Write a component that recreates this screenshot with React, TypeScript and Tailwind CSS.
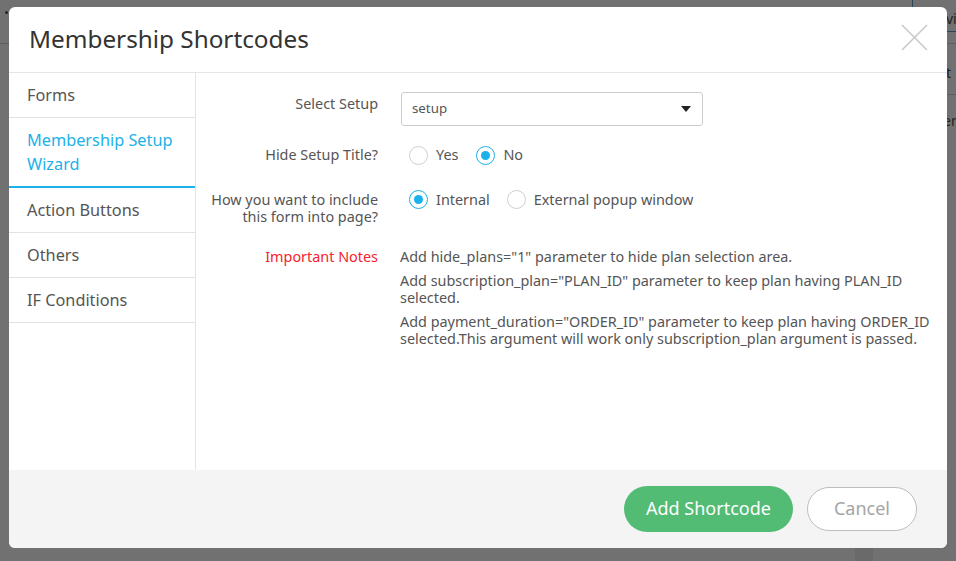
import React from "react";

const font = { fontFamily: '"Noto Sans", "Open Sans", Arial, sans-serif' };

function Radio({ checked, label }: { checked: boolean; label: string }) {
  return (
    <div className="flex items-center">
      <span
        className={
          checked
            ? "w-[19px] h-[19px] rounded-full border border-[#1ab2e8] flex items-center justify-center bg-white"
            : "w-[19px] h-[19px] rounded-full border border-[#cfcfcf] bg-white"
        }
      >
        {checked && <span className="w-[9px] h-[9px] rounded-full bg-[#1ab2e8]" />}
      </span>
      <span className="ml-[8px] text-[14.4px] text-[#555]">{label}</span>
    </div>
  );
}

export default function App() {
  const tabs = [
    { label: "Forms", active: false },
    { label: "Membership Setup Wizard", active: true },
    { label: "Action Buttons", active: false },
    { label: "Others", active: false },
    { label: "IF Conditions", active: false },
  ];
  return (
    <div className="relative w-[956px] h-[561px] bg-[#717171] overflow-hidden" style={font}>
      {/* dimmed page behind the overlay */}
      <div className="absolute left-[912px] top-[-4px] w-[60px] h-[36px] rounded-[4px] border border-[#26475a] text-[#1d1d1d] text-[14px] pl-[33px] pt-[11px]">
        vie
      </div>
      <div className="absolute left-[940px] top-[43px] w-[20px] h-px bg-[#5e5e5e]" />
      <div className="absolute left-[940px] top-[94px] w-[20px] h-px bg-[#5e5e5e]" />
      <div className="absolute left-[946px] top-[62px] text-[14px] text-[#222]">t</div>
      <div className="absolute left-[943px] top-[110px] text-[14px] text-[#222]">er</div>
      <div className="absolute left-0 top-[43px] w-[10px] h-px bg-[#5e5e5e]" />
      <div className="absolute left-[5px] top-[11px] w-[3px] h-[3px] rounded-full bg-[#222]" />
      <div className="absolute left-[855px] top-[540px] w-[18px] h-[30px] bg-[#6a6a6a]" />

      {/* modal */}
      <div className="absolute left-[9px] top-[7px] w-[938px] h-[541px] bg-white rounded-[6px] overflow-hidden flex flex-col">
        <div className="h-[66px] shrink-0 flex items-center justify-between border-b border-[#e5e5e5] pl-[20px] pr-[19px]">
          <h1 className="text-[24.3px] text-[#333] leading-none pb-[1px]">Membership Shortcodes</h1>
          <svg width="27" height="27" viewBox="0 0 27 27" className="mb-[4px]">
            <path d="M1 1 L26 26 M26 1 L1 26" stroke="#c9c9c9" strokeWidth="1.6" fill="none" />
          </svg>
        </div>
        <div className="flex flex-1 min-h-0">
          <div className="w-[187px] shrink-0 border-r border-[#e3e3e3]">
            {tabs.map((t) =>
              t.active ? (
                <div
                  key={t.label}
                  className="px-[18px] pt-[10px] pb-[10px] text-[16.3px] leading-[24px] text-[#1ab2e8] border-b-2 border-[#1ab2e8]"
                >
                  Membership Setup
                  <br />
                  Wizard
                </div>
              ) : (
                <div
                  key={t.label}
                  className="px-[18px] py-[10px] text-[16.3px] leading-[24px] text-[#555] border-b border-[#e3e3e3]"
                >
                  {t.label}
                </div>
              )
            )}
          </div>
          <div className="flex-1 pt-[19px]">
            {/* Select Setup */}
            <div className="flex">
              <div className="w-[182px] text-right text-[14.4px] leading-[20px] text-[#555] pt-[2px]">Select Setup</div>
              <div className="ml-[23px] w-[302px] h-[34px] border border-[#ccc] rounded-[3px] flex items-center justify-between pl-[10px] pr-[11px]">
                <span className="text-[13.3px] text-[#555]">setup</span>
                <svg width="10" height="6" viewBox="0 0 10 6">
                  <path d="M0 0 L10 0 L5 6 Z" fill="#222" />
                </svg>
              </div>
            </div>
            {/* Hide setup title */}
            <div className="flex items-center mt-[19px] h-[20px]">
              <div className="w-[182px] text-right text-[14.4px] leading-[20px] text-[#555]">Hide Setup Title?</div>
              <div className="ml-[31px] flex items-center gap-[18px]">
                <Radio checked={false} label="Yes" />
                <Radio checked={true} label="No" />
              </div>
            </div>
            {/* include */}
            <div className="flex mt-[26px]">
              <div className="w-[182px] text-right text-[14.4px] leading-[17px] text-[#555]">
                How you want to include
                <br />
                this form into page?
              </div>
              <div className="ml-[31px] flex items-start gap-[17px] -mt-[2px]">
                <Radio checked={true} label="Internal" />
                <Radio checked={false} label="External popup window" />
              </div>
            </div>
            {/* notes */}
            <div className="flex mt-[23px]">
              <div className="w-[182px] text-right text-[14.4px] leading-[17px] text-[#f5222d]">Important Notes</div>
              <div className="ml-[22px] w-[540px] text-[14.4px] leading-[17px] text-[#555] flex flex-col gap-[7px]">
                <p>Add hide_plans="1" parameter to hide plan selection area.</p>
                <p>Add subscription_plan="PLAN_ID" parameter to keep plan having PLAN_ID selected.</p>
                <p>
                  Add payment_duration="ORDER_ID" parameter to keep plan having ORDER_ID selected.This argument will
                  work only subscription_plan argument is passed.
                </p>
              </div>
            </div>
          </div>
        </div>
        <div className="h-[78px] shrink-0 bg-[#f4f4f4] flex items-center justify-end pr-[30px] gap-[14px] pb-[1px]">
          <button className="w-[169px] h-[46px] rounded-full bg-[#52bb74] text-white text-[18px]">Add Shortcode</button>
          <button className="w-[110px] h-[44px] rounded-full bg-white border border-[#bdbdbd] text-[#a5a5a5] text-[18px]">
            Cancel
          </button>
        </div>
      </div>
    </div>
  );
}
